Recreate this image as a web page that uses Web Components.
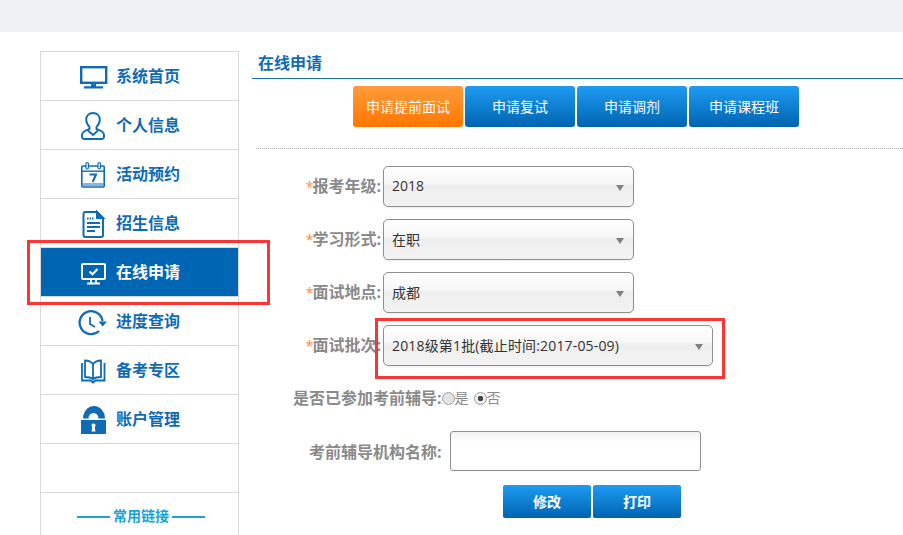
<!DOCTYPE html>
<html lang="zh">
<head>
<meta charset="utf-8">
<title>在线申请</title>
<style>
	html, body { margin: 0; height: 535px; overflow: hidden; background: #fff; }
	body { font-family: "Open Sans", "Noto Sans CJK SC", sans-serif; position: relative; }
</style>
</head>
<body>
<online-apply></online-apply>

<template id="icons">
	<svg data-icon="monitor" viewBox="0 0 30 30" fill="none" stroke="currentColor"><rect x="3.200" y="6.200" width="25" height="15.600" stroke-width="2.400"/><path d="M14 22v2.500h3V22M6 26.300h19" stroke-width="2.200"/></svg>
	<svg data-icon="user" viewBox="0 0 30 30" fill="none" stroke="currentColor" stroke-width="1.900"><path d="M15 3c-4.200 0-6.800 3-6.800 6.500 0 3 1.300 5.500 3.300 7.500v2c-3 1.200-7.500 2-7.500 6v1.500c0 1.500 1 2.500 2.500 2.500h17c1.500 0 2.500-1 2.500-2.500V25c0-4-4.500-4.800-7.500-6v-2c2-2 3.300-4.500 3.300-7.500C21.800 6 19.200 3 15 3z"/><path d="M10 20.500l5 4.500 5-4.500"/></svg>
	<svg data-icon="calendar" viewBox="0 0 30 30" fill="none" stroke="currentColor"><rect x="3.800" y="7" width="22.400" height="21" rx="1" stroke-width="1.600"/><path d="M4 12.200h22" stroke-width="1.400"/><path d="M4.500 25.500h21" stroke-width="3" opacity=".5"/><rect x="8" y="3.500" width="2.400" height="6.500" rx="1.200" fill="#fff" stroke-width="1.200"/><rect x="20" y="3.500" width="2.400" height="6.500" rx="1.200" fill="#fff" stroke-width="1.200"/><path d="M11.500 15.500h6.500l-3.300 7.500" stroke-width="2"/></svg>
	<svg data-icon="doc" viewBox="0 0 30 30" fill="none" stroke="currentColor" stroke-width="2"><path d="M7.500 4h11.500l6 6v17a2 2 0 0 1-2 2H7.500a2 2 0 0 1-2-2V6a2 2 0 0 1 2-2z"/><path d="M19 4v6h6z" fill="currentColor"/><path d="M9 10.500h7" stroke-dasharray="1.500 1"/><path d="M9 15h13M9 19h13M9 23h8" stroke-width="1.800"/></svg>
	<svg data-icon="check" viewBox="0 0 30 30" fill="none" stroke="currentColor"><rect x="4" y="7" width="23" height="15" rx="1" stroke-width="2"/><path d="M11.500 14.500l3 2.800 5-5.300" stroke-width="2"/><path d="M13 22v3.500M18 22v3.500M9 26.500h13" stroke-width="1.800"/></svg>
	<svg data-icon="clock" viewBox="0 0 30 30" fill="none" stroke="currentColor" stroke-width="2.300"><path d="M24.500 15A11.500 11.500 0 1 0 21 25"/><path d="M20.500 15.500h8.500l-4.300 5z" fill="currentColor" stroke="none"/><path d="M12 11v7l5 3" stroke-width="1.800"/></svg>
	<svg data-icon="book" viewBox="0 0 30 30" fill="none" stroke="currentColor" stroke-width="1.800"><path d="M15 9v15c-2-1.500-4-2-8-2V5.500c4 0 6 1 8 3.500zM15 9v15c2-1.500 4-2 8-2V5.500c-4 0-6 1-8 3.500z"/><path d="M4 8v17.500h8.500L15 27.500l2.500-2h9V8"/></svg>
	<svg data-icon="lock" viewBox="0 0 30 30"><path d="M5 14.500A11 12.500 0 0 1 27 14.500h-6.500A5 5.500 0 0 0 10.500 14.500z" fill="currentColor"/><path fill="currentColor" fill-rule="evenodd" d="M3 16h25v15H3zM15.500 19.500a2 2 0 0 0-1.200 3.600l-.8 4.400h4l-.8-4.400a2 2 0 0 0-1.200-3.600z"/></svg>
</template>

<script>
const iconBook = document.getElementById('icons').content;

class NavItem extends HTMLElement {
	constructor() {
		super();
		this.attachShadow({ mode: 'open' });
		this.shadowRoot.innerHTML = `
		<style>
			:host { display: flex; align-items: center; box-sizing: border-box; height: 49px; padding: 0 0 2px 37px; border-bottom: 1px solid #d9d9d9; color: #0f6cb4; font-size: 16px; font-weight: 700; }
			:host([active]) { background: #0066b3; color: #fff; border-bottom-color: #cfdbe6; box-shadow: 0 -1px 0 #cfdbe6; }
			svg { display: block; width: 30px; height: 30px; margin: 2px 8px 0 0; flex: none; }
		</style>
		<slot></slot>`;
		const icon = iconBook.querySelector(`[data-icon="${this.getAttribute('icon')}"]`);
		if (icon) {
			this.shadowRoot.insertBefore(icon.cloneNode(true), this.shadowRoot.querySelector('slot'));
		}
	}
}
customElements.define('nav-item', NavItem);

class SideBar extends HTMLElement {
	constructor() {
		super();
		this.attachShadow({ mode: 'open' });
		this.shadowRoot.innerHTML = `
		<style>
			:host { display: block; width: 197px; flex: none; border: 1px solid #d9d9d9; border-bottom: none; background: #fff; }
			.blank { height: 48px; border-bottom: 1px solid #d9d9d9; }
			.links { display: flex; align-items: center; justify-content: center; gap: 3px; height: 47px; padding-left: 3px; color: #1aa3db; font-size: 14px; font-weight: 700; }
			.links span { line-height: 14px; margin-top: -2px; }
			.links i { display: block; width: 33px; height: 2px; background: #1aa3db; }
		</style>
		<nav-item icon="monitor">系统首页</nav-item>
		<nav-item icon="user">个人信息</nav-item>
		<nav-item icon="calendar">活动预约</nav-item>
		<nav-item icon="doc">招生信息</nav-item>
		<nav-item icon="check" active>在线申请</nav-item>
		<nav-item icon="clock">进度查询</nav-item>
		<nav-item icon="book">备考专区</nav-item>
		<nav-item icon="lock">账户管理</nav-item>
		<div class="blank"></div>
		<div class="links"><i></i><span>常用链接</span><i></i></div>`;
	}
}
customElements.define('side-bar', SideBar);

class BlueButton extends HTMLElement {
	constructor() {
		super();
		this.attachShadow({ mode: 'open' });
		this.shadowRoot.innerHTML = `
		<style>
			:host { display: flex; align-items: center; justify-content: center; box-sizing: border-box; width: 110px; height: 41px; padding-bottom: 2px; border-radius: 3px; color: #fff; font-size: 14px; background: linear-gradient(#1e9bf2, #0064b1); }
			:host([orange]) { background: linear-gradient(#ff9c3c, #ff7700); }
			:host([small]) { width: 88px; height: 33px; border-radius: 2px; font-weight: 700; }
		</style>
		<slot></slot>`;
	}
}
customElements.define('blue-button', BlueButton);

class SelectBox extends HTMLElement {
	constructor() {
		super();
		this.attachShadow({ mode: 'open' });
		this.shadowRoot.innerHTML = `
		<style>
			:host { display: flex; align-items: center; box-sizing: border-box; width: 251px; height: 41px; padding: 0 9px 0 8px; border: 1px solid #8f8f8f; border-radius: 5px; color: #333; font-size: 14px; background: linear-gradient(#fff 0, #f8f8f8 40%, #eeeeee 50%, #f3f3f3 100%); box-shadow: 0 1px 2px rgba(0,0,0,.08); }
			:host([wide]) { width: 330px; letter-spacing: .16px; }
			span { flex: 1; white-space: nowrap; margin-top: -2px; }
			i { display: block; width: 0; height: 0; margin-top: 2px; border: 4px solid transparent; border-top: 6px solid #808080; border-bottom: none; }
		</style>
		<span><slot></slot></span><i></i>`;
	}
}
customElements.define('select-box', SelectBox);

class FormRow extends HTMLElement {
	constructor() {
		super();
		this.attachShadow({ mode: 'open' });
		this.shadowRoot.innerHTML = `
		<style>
			:host { display: flex; align-items: center; margin-bottom: 12px; }
			label { box-sizing: border-box; width: 131px; padding: 0 2px 3px 0; text-align: right; color: #8a8a8a; font-size: 16px; font-weight: 700; white-space: nowrap; }
			b { margin-right: -1px; color: #ff8a3c; font-weight: 400; font-size: 14px; }
		</style>
		<label><b>*</b>${this.getAttribute('label')}:</label><slot></slot>`;
	}
}
customElements.define('form-row', FormRow);

class RadioMark extends HTMLElement {
	constructor() {
		super();
		this.attachShadow({ mode: 'open' });
		this.shadowRoot.innerHTML = `
		<style>
			:host { display: inline-flex; align-items: center; color: #8a8a8a; font-size: 14px; font-weight: 400; }
			i { display: block; box-sizing: border-box; width: 13px; height: 13px; margin-top: 2px; border: 1px solid #a0a0a0; border-radius: 50%; background: #e4e4e4; }
			:host([checked]) i { background: radial-gradient(circle, #444 0 2.500px, #eee 3px); }
		</style>
		<i></i><slot></slot>`;
	}
}
customElements.define('radio-mark', RadioMark);

class RedMark extends HTMLElement {
	constructor() {
		super();
		this.attachShadow({ mode: 'open' });
		this.shadowRoot.innerHTML = `
		<style>
			:host { display: block; position: absolute; box-sizing: border-box; border: 3px solid #f93535; pointer-events: none; }
		</style>`;
	}
}
customElements.define('red-mark', RedMark);

class ApplyForm extends HTMLElement {
	constructor() {
		super();
		this.attachShadow({ mode: 'open' });
		this.shadowRoot.innerHTML = `
		<style>
			:host { display: block; flex: 1; min-width: 0; }
			h2 { margin: 0; height: 27px; line-height: 24px; padding-left: 6px; border-bottom: 1px solid #1a6fb0; color: #0f6cb4; font-size: 16px; font-weight: 700; }
			.tabs { display: flex; gap: 2px; margin: 7px 0 0 101px; }
			.dots { margin: 21px 0 17px 4px; border-top: 1px dotted #aaa; }
			.radio { display: flex; align-items: center; gap: 5px; box-sizing: border-box; height: 20px; padding-bottom: 2px; margin: 22px 0 23px 41px; color: #8a8a8a; font-size: 16px; font-weight: 700; }
			.radio span { margin-right: -5px; }
			.name { display: flex; align-items: center; margin-left: 57px; color: #8a8a8a; font-size: 16px; font-weight: 700; }
			.name div { box-sizing: border-box; width: 251px; height: 40px; margin-left: 8px; border: 1px solid #8f8f8f; border-radius: 3px; background: linear-gradient(#f1f1f1, #fff 10px); }
			.actions { display: flex; gap: 2px; margin: 14px 0 0 251px; }
		</style>
		<h2>在线申请</h2>
		<div class="tabs">
			<blue-button orange>申请提前面试</blue-button>
			<blue-button>申请复试</blue-button>
			<blue-button>申请调剂</blue-button>
			<blue-button>申请课程班</blue-button>
		</div>
		<div class="dots"></div>
		<form-row label="报考年级"><select-box>2018</select-box></form-row>
		<form-row label="学习形式"><select-box>在职</select-box></form-row>
		<form-row label="面试地点"><select-box>成都</select-box></form-row>
		<form-row label="面试批次"><select-box wide>2018级第1批(截止时间:2017-05-09)</select-box></form-row>
		<div class="radio"><span>是否已参加考前辅导:</span><radio-mark>是</radio-mark><radio-mark checked>否</radio-mark></div>
		<div class="name">考前辅导机构名称:<div></div></div>
		<div class="actions"><blue-button small>修改</blue-button><blue-button small>打印</blue-button></div>`;
	}
}
customElements.define('apply-form', ApplyForm);

class OnlineApply extends HTMLElement {
	constructor() {
		super();
		this.attachShadow({ mode: 'open' });
		this.shadowRoot.innerHTML = `
		<style>
			:host { display: block; }
			.top { height: 32px; background: #eef0f3; }
			.body { display: flex; gap: 13px; padding: 19px 0 0 40px; }
			.a { left: 27px; top: 240px; width: 243px; height: 65px; }
			.b { left: 375px; top: 318px; width: 350px; height: 61px; }
		</style>
		<div class="top"></div>
		<div class="body"><side-bar></side-bar><apply-form></apply-form></div>
		<red-mark class="a"></red-mark>
		<red-mark class="b"></red-mark>`;
	}
}
customElements.define('online-apply', OnlineApply);
</script>
</body>
</html>
